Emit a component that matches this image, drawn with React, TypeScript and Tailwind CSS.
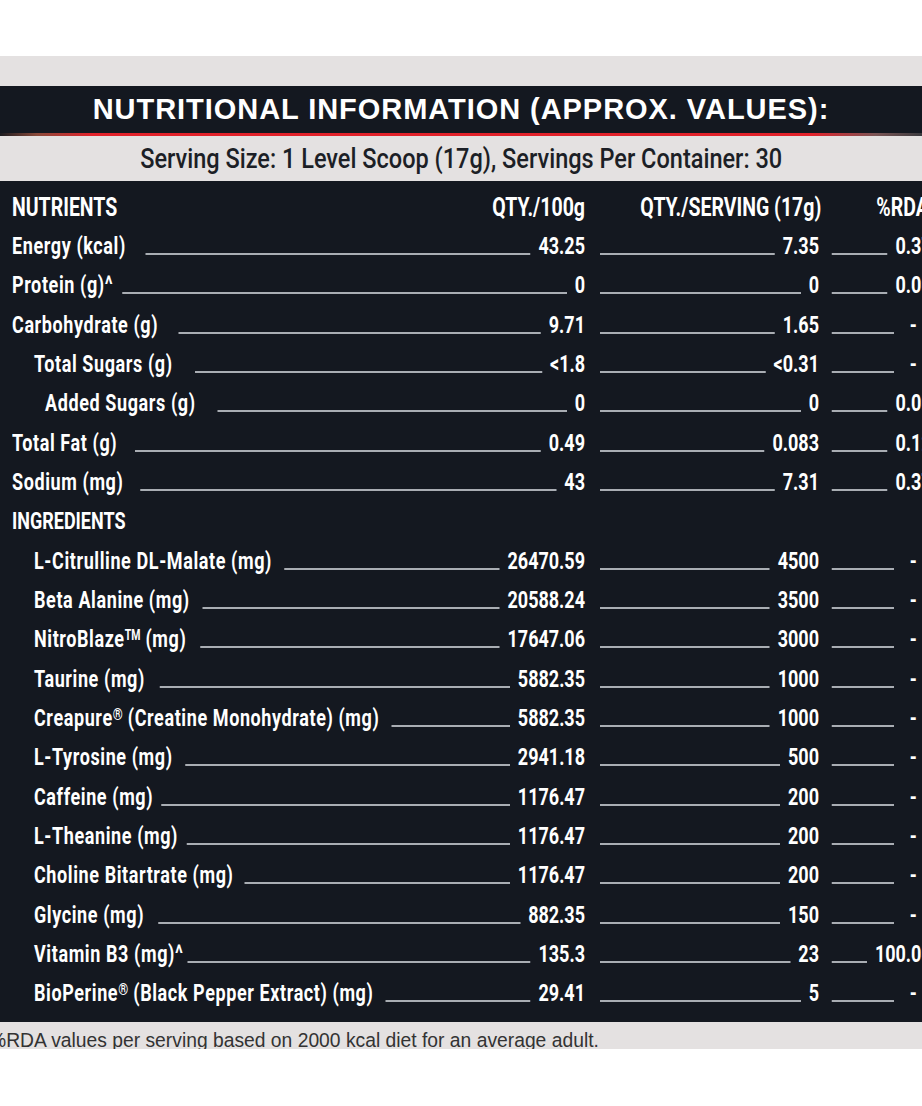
import React from "react";

type Row = {
  label: string;
  indent: 0 | 1 | 2;
  v1: string;
  v2: string;
  rda: string;
  gap: number;
};

// horizontal compression applied to the table body (condensed typeface look)
const S = 0.75;

const nutrients: Row[] = [
  { label: "Energy (kcal)", indent: 0, v1: "43.25", v2: "7.35", rda: "0.37", gap: 20 },
  { label: "Protein (g)^", indent: 0, v1: "0", v2: "0", rda: "0.00", gap: 9 },
  { label: "Carbohydrate (g)", indent: 0, v1: "9.71", v2: "1.65", rda: "-", gap: 20 },
  { label: "Total Sugars (g)", indent: 1, v1: "<1.8", v2: "<0.31", rda: "-", gap: 22 },
  { label: "Added Sugars (g)", indent: 2, v1: "0", v2: "0", rda: "0.00", gap: 22 },
  { label: "Total Fat (g)", indent: 0, v1: "0.49", v2: "0.083", rda: "0.12", gap: 18 },
  { label: "Sodium (mg)", indent: 0, v1: "43", v2: "7.31", rda: "0.37", gap: 17 },
];

const ingredients: Row[] = [
  { label: "L-Citrulline DL-Malate (mg)", indent: 1, v1: "26470.59", v2: "4500", rda: "-", gap: 12 },
  { label: "Beta Alanine (mg)", indent: 1, v1: "20588.24", v2: "3500", rda: "-", gap: 13 },
  { label: "NitroBlaze™ (mg)", indent: 1, v1: "17647.06", v2: "3000", rda: "-", gap: 14 },
  { label: "Taurine (mg)", indent: 1, v1: "5882.35", v2: "1000", rda: "-", gap: 15 },
  { label: "Creapure® (Creatine Monohydrate) (mg)", indent: 1, v1: "5882.35", v2: "1000", rda: "-", gap: 12 },
  { label: "L-Tyrosine (mg)", indent: 1, v1: "2941.18", v2: "500", rda: "-", gap: 13 },
  { label: "Caffeine (mg)", indent: 1, v1: "1176.47", v2: "200", rda: "-", gap: 8 },
  { label: "L-Theanine (mg)", indent: 1, v1: "1176.47", v2: "200", rda: "-", gap: 9 },
  { label: "Choline Bitartrate (mg)", indent: 1, v1: "1176.47", v2: "200", rda: "-", gap: 11 },
  { label: "Glycine (mg)", indent: 1, v1: "882.35", v2: "150", rda: "-", gap: 14 },
  { label: "Vitamin B3 (mg)^", indent: 1, v1: "135.3", v2: "23", rda: "100.00", gap: 4 },
  { label: "BioPerine® (Black Pepper Extract) (mg)", indent: 1, v1: "29.41", v2: "5", rda: "-", gap: 12 },
];

const indentClass = ["pl-0", "pl-[29.33px]", "pl-[44px]"];

function Label({ text }: { text: string }) {
  const parts = text.split(/([®™])/);
  return (
    <span className="whitespace-nowrap tracking-[0.8px]">
      {parts.map((p, i) =>
        p === "®" ? (
          <span key={i} className="relative -top-[6px] text-[17px] font-bold tracking-normal">
            ®
          </span>
        ) : p === "™" ? (
          <span key={i} className="relative -top-[7px] text-[14px] font-bold tracking-normal">
            TM
          </span>
        ) : (
          <React.Fragment key={i}>{p}</React.Fragment>
        )
      )}
    </span>
  );
}

function Line() {
  return <div className="h-[2px] mt-[16px] flex-1 bg-[#a9adb3]" />;
}

function DataRow({ row }: { row: Row }) {
  const isDash = row.rda === "-";
  return (
    <div className="flex items-center h-[39.33px] pl-[16px]">
      <div className={`flex items-center w-[764px] shrink-0 ${indentClass[row.indent]}`}>
        <Label text={row.label} />
        <div className="flex-1 flex items-center" style={{ marginLeft: row.gap / S }}>
          <Line />
        </div>
        <span className="ml-[10.67px] whitespace-nowrap">{row.v1}</span>
      </div>
      <div className="flex items-center w-[292px] shrink-0 ml-[20px]">
        <Line />
        <span className="ml-[10.67px] whitespace-nowrap">{row.v2}</span>
      </div>
      <div className="flex items-center w-[133px] shrink-0 ml-[17.33px]">
        <Line />
        {isDash ? (
          <span className="ml-[21.33px] mr-[20px]">-</span>
        ) : (
          <span className="ml-[10.67px] whitespace-nowrap">{row.rda}</span>
        )}
      </div>
    </div>
  );
}

export default function App() {
  return (
    <div className="w-full min-h-[1106px] bg-white">
      <div className="h-[56px] bg-white" />
      <div className="h-[30px] bg-[#e4e1e1]" />
      <div className="h-[47px] bg-[#141820] flex items-center justify-center">
        <h1 className="font-['Liberation_Sans',sans-serif] font-bold text-white text-[29px] leading-none tracking-[0.95px] whitespace-nowrap">
          NUTRITIONAL INFORMATION (APPROX. VALUES):
        </h1>
      </div>
      <div className="h-[3px] bg-[linear-gradient(to_right,#1a1b20_0%,#8a4a3a_4%,#e3222b_10%,#e3222b_88%,#7a5555_95%,#3a3a3e_100%)]" />
      <div className="h-[45px] bg-[#e4e1e1] flex items-center justify-center">
        <p className="scale-x-[0.84] font-['Roboto',sans-serif] font-medium text-[28px] leading-none text-[#1c1f26] whitespace-nowrap">
          Serving Size: 1 Level Scoop (17g), Servings Per Container: 30
        </p>
      </div>
      <div className="bg-[#141820] pt-[6px] pb-[9px] overflow-hidden">
        <div className="w-[1243px] origin-left scale-x-[0.75] text-white font-['Roboto',sans-serif] font-bold text-[24px] leading-none">
          <div className="flex items-center h-[39.33px] pl-[16px] text-[26px]">
            <div className="flex items-center justify-between w-[764px] shrink-0">
              <span>NUTRIENTS</span>
              <span className="whitespace-nowrap">QTY./100g</span>
            </div>
            <div className="flex items-center justify-end w-[292px] shrink-0 ml-[20px]">
              <span className="-mr-[3px] whitespace-nowrap">QTY./SERVING (17g)</span>
            </div>
            <div className="flex items-center justify-start w-[133px] shrink-0 ml-[17.33px]">
              <span className="ml-[59px]">%RDA</span>
            </div>
          </div>
          {nutrients.map((r) => (
            <DataRow key={r.label} row={r} />
          ))}
          <div className="flex items-center h-[39.33px] pl-[16px]">
            <span>INGREDIENTS</span>
          </div>
          {ingredients.map((r) => (
            <DataRow key={r.label} row={r} />
          ))}
        </div>
      </div>
      <div className="h-[27px] bg-[#e4e1e1] overflow-hidden pt-[9px]">
        <p className="-ml-[11px] font-['Liberation_Sans',sans-serif] text-[19.3px] leading-none text-[#333333] whitespace-nowrap">
          %RDA values per serving based on 2000 kcal diet for an average adult.
        </p>
      </div>
    </div>
  );
}
